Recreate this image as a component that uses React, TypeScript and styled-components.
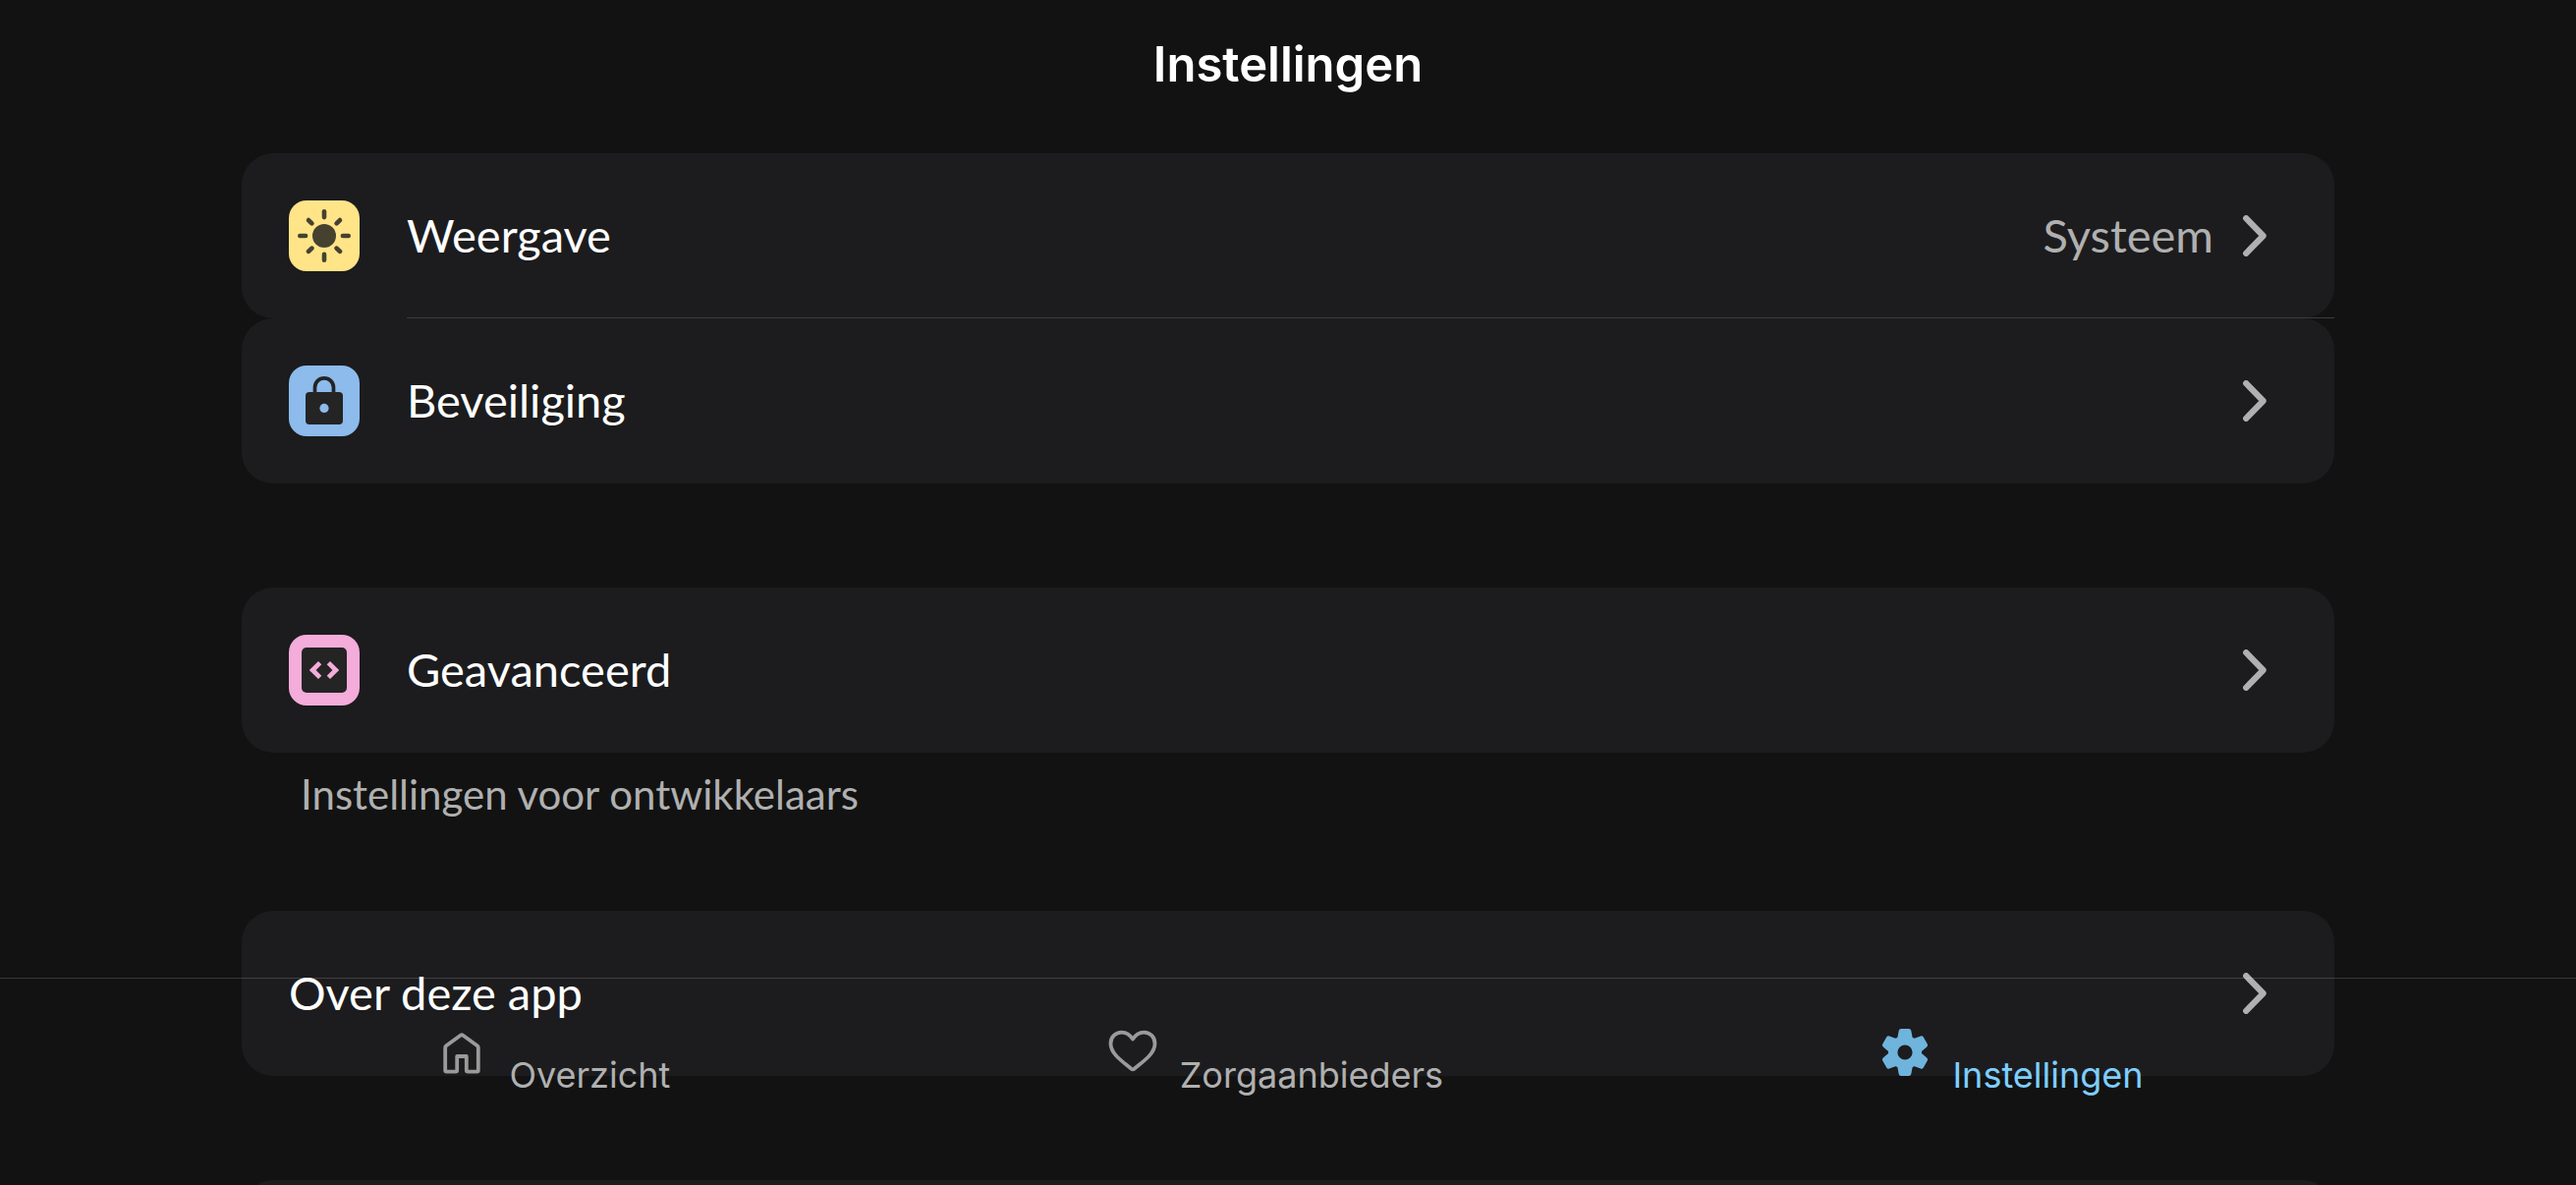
import React from "react";
import styled, { createGlobalStyle } from "styled-components";

const textFont = `Lato, "Noto Sans", sans-serif`;
const uiFont = `Inter, "Liberation Sans", sans-serif`;

const GlobalStyle = createGlobalStyle`
  *, *::before, *::after { box-sizing: border-box; }
  body { margin: 0; background: #121212; color: #ffffff; font-family: ${textFont}; }
`;

const Screen = styled.div`
  position: relative;
  height: 100vh;
  overflow: hidden;
  background: #121212;
`;

const Header = styled.header`
  display: flex;
  justify-content: center;
  align-items: center;
  height: 132px;
`;

const Title = styled.h1`
  margin: 0;
  font: 600 49px/60px ${uiFont};
`;

const Content = styled.main`
  padding: 24px 246px 0;
`;

const Section = styled.section<{ $gap?: number }>`
  display: flex;
  flex-direction: column;
  margin-bottom: ${(p) => p.$gap ?? 106}px;
`;

const Row = styled.button<{ $divided?: boolean }>`
  position: relative;
  display: flex;
  align-items: center;
  gap: 48px;
  width: 100%;
  height: 168px;
  padding: 0 69px 0 48px;
  border: 0;
  border-radius: 32px;
  background: #1c1c1e;
  color: #ffffff;
  font: 400 47px/60px ${textFont};
  text-align: left;
  cursor: pointer;

  &::after {
    content: "";
    display: ${(p) => (p.$divided ? "block" : "none")};
    position: absolute;
    left: 168px;
    right: 0;
    bottom: 0;
    height: 1px;
    background: #3c3c3e;
  }
`;

const NextCard = styled.div`
  height: 168px;
  border-radius: 32px;
  background: #1c1c1e;
`;

const Badge = styled.span<{ $color: string }>`
  display: flex;
  flex: none;
  width: 72px;
  height: 72px;
  border-radius: 18px;
  background: ${(p) => p.$color};
`;

const Label = styled.span`
  flex: 1;
  padding-bottom: 2px;
`;

const Trailing = styled.span`
  display: flex;
  align-items: center;
  gap: 30px;
  color: #b0b0b0;
`;

const Value = styled.span`
  padding-bottom: 2px;
`;

const Caption = styled.p`
  margin: 0;
  padding: 14px 60px 0;
  color: #b0b0b0;
  font-size: 42px;
  line-height: 56px;
`;

const TabBar = styled.nav`
  position: absolute;
  left: 0;
  right: 0;
  bottom: 0;
  display: flex;
  justify-content: space-evenly;
  align-items: flex-start;
  height: 211px;
  padding: 38px 6px 0 0;
  border-top: 1px solid rgba(255, 255, 255, 0.16);
`;

const Tab = styled.a<{ $active?: boolean }>`
  display: flex;
  align-items: flex-start;
  gap: 12px;
  color: ${(p) => (p.$active ? "#7dcfff" : "#b0b0b0")};
  font: 400 36px/44px ${uiFont};
  text-decoration: none;

  svg {
    opacity: 0.85;
  }
`;

const TabLabel = styled.span`
  padding-top: 38px;
`;

const Chevron = () => (
  <svg width="24" height="42" viewBox="0 0 24 42" fill="none" aria-hidden="true">
    <path d="M3.2 3.2 20.6 21 3.2 38.8" stroke="currentColor" strokeWidth="6.2" strokeLinecap="round" strokeLinejoin="round" />
  </svg>
);

const SunIcon = () => (
  <svg width="72" height="72" viewBox="0 0 72 72" aria-hidden="true">
    <circle cx="36" cy="36" r="12" fill="#46412f" />
    <g stroke="#46412f" strokeWidth="4.6" strokeLinecap="round">
      {[0, 45, 90, 135, 180, 225, 270, 315].map((angle) => (
        <path key={angle} d={angle % 90 ? "M36 13.4v4.8" : "M36 11.3v5.8"} transform={`rotate(${angle} 36 36)`} />
      ))}
    </g>
  </svg>
);

const LockIcon = () => (
  <svg width="72" height="72" viewBox="0 0 72 72" fill="none" aria-hidden="true">
    <path d="M26.5 30V22.3a9.5 9.5 0 0 1 19 0V30" stroke="#242424" strokeWidth="3.7" />
    <rect x="17" y="27" width="38" height="33" rx="4" fill="#242424" />
    <circle cx="36" cy="43.4" r="4.6" fill="#8cbbec" />
  </svg>
);

const CodeIcon = () => (
  <svg width="72" height="72" viewBox="0 0 72 72" aria-hidden="true">
    <rect x="13" y="13" width="46" height="46" rx="5" fill="#242424" />
    <path
      d="M30 27l3.3 3.2L27.6 36l5.7 5.8L30 45l-9.2-9zM42 27l-3.3 3.2 5.7 5.8-5.7 5.8L42 45l9.2-9z"
      fill="#f4acdb"
    />
  </svg>
);

const HomeIcon = () => (
  <svg width="72" height="72" viewBox="0 0 72 72" fill="none" aria-hidden="true">
    <path
      d="M35 19.500Q36 18.800 37 19.500L51.800 30.200Q52.800 31 52.800 32.200V55.300Q52.800 56.700 51.400 56.700H42.200Q40.800 56.700 40.800 55.300V41H31.200V55.300Q31.200 56.700 29.800 56.700H20.600Q19.200 56.700 19.200 55.300V32.200Q19.200 31 20.200 30.200Z"
      stroke="currentColor"
      strokeWidth="3.8"
      strokeLinejoin="round"
    />
  </svg>
);

const HeartIcon = () => (
  <svg width="72" height="72" viewBox="0 0 72 72" fill="none" aria-hidden="true">
    <path
      d="M36 23.600C33.200 19.200 29.200 16.600 24.800 16.600C18.200 16.600 13.500 21.500 13.500 28C13.500 38.500 25 45.800 34.500 53.800Q36 55 37.500 53.800C47 45.800 58.500 38.500 58.500 28C58.500 21.500 53.800 16.600 47.200 16.600C42.800 16.600 38.800 19.200 36 23.600Z"
      stroke="currentColor"
      strokeWidth="3.8"
      strokeLinejoin="round"
    />
  </svg>
);

const GearIcon = () => (
  <svg width="72" height="72" viewBox="0 0 72 72" fill="none" aria-hidden="true">
    <g transform="translate(36 37)">
      <circle r="12.300" stroke="currentColor" strokeWidth="9.400" />
      {[0, 60, 120, 180, 240, 300].map((angle) => (
        <path
          key={angle}
          d="M-7.800-14L-6.300-22Q-5.900-24-4-24H4Q5.900-24 6.300-22L7.800-14Z"
          fill="currentColor"
          transform={`rotate(${angle})`}
        />
      ))}
    </g>
  </svg>
);

type RowProps = { label: string; value?: string; divided?: boolean; color?: string; icon?: React.ReactNode };

const SettingsRow = ({ label, value, divided, color, icon }: RowProps) => (
  <Row type="button" $divided={divided}>
    {color && <Badge $color={color}>{icon}</Badge>}
    <Label>{label}</Label>
    <Trailing>
      {value && <Value>{value}</Value>}
      <Chevron />
    </Trailing>
  </Row>
);

export default function App() {
  return (
    <>
      <GlobalStyle />
      <Screen>
        <Header>
          <Title>Instellingen</Title>
        </Header>
        <Content>
          <Section>
            <SettingsRow label="Weergave" value="Systeem" divided color="#ffe488" icon={<SunIcon />} />
            <SettingsRow label="Beveiliging" color="#8cbbec" icon={<LockIcon />} />
          </Section>
          <Section $gap={91}>
            <SettingsRow label="Geavanceerd" color="#f4acdb" icon={<CodeIcon />} />
            <Caption>Instellingen voor ontwikkelaars</Caption>
          </Section>
          <Section>
            <SettingsRow label="Over deze app" />
          </Section>
          <NextCard />
        </Content>
        <TabBar>
          <Tab href="#overzicht">
            <HomeIcon />
            <TabLabel>Overzicht</TabLabel>
          </Tab>
          <Tab href="#zorgaanbieders">
            <HeartIcon />
            <TabLabel>Zorgaanbieders</TabLabel>
          </Tab>
          <Tab href="#instellingen" $active aria-current="page">
            <GearIcon />
            <TabLabel>Instellingen</TabLabel>
          </Tab>
        </TabBar>
      </Screen>
    </>
  );
}
